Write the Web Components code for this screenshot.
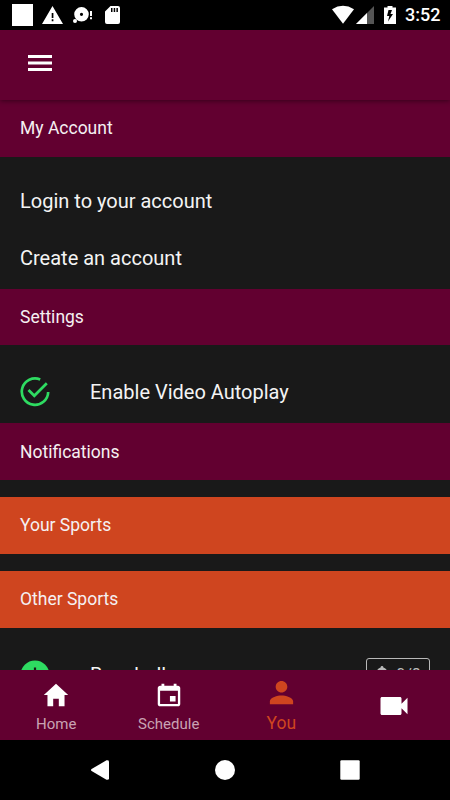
<!DOCTYPE html>
<html lang="en">
<head>
<meta charset="utf-8">
<title>My Account</title>
<style>
    html, body {
        margin: 0;
        height: 100%;
        background: #000;
        overflow: hidden;
    }
</style>
</head>
<body>

<template id="status-bar">
    <style>
        :host {
            display: flex;
            align-items: center;
            flex: none;
            height: 30px;
            box-sizing: border-box;
            padding: 0 9.500px 0 12px;
            background: #000;
            color: white;
            font-size: 18px;
            font-weight: 500;
        }
        svg {
            display: block;
            fill: white;
            flex: none;
        }
        .time {
            margin-left: auto;
            line-height: 30px;
        }
    </style>
    <svg width="120" height="30" viewBox="12 0 120 30">
        <path d="M12 4h21v22H12z"/>
        <path fill-rule="evenodd" d="M52.5 6L63 24H42zM51.7 13v5h1.7v-5zM51.7 19.200v2h1.700v-2z"/>
        <path fill-rule="evenodd" d="M81.500 7a7.300 7.300 0 1 1 0 14.600a7.300 7.300 0 0 1 0-14.600zM81.500 12.700a1.600 1.600 0 1 0 0 3.200a1.600 1.600 0 0 0 0-3.200z"/>
        <circle cx="75" cy="21" r="2"/>
        <path d="M90 11h2v5h-2zM90 17.200h2v2h-2z"/>
        <path fill-rule="evenodd" d="M110.500 6h7.500q2 0 2 2v14q0 2-2 2h-11q-2 0-2-2V11.500zM111 8v4h1.500V8zM113.700 8v4h1.500V8zM116.400 8v4h1.500V8z"/>
    </svg>
    <svg width="66" height="30" viewBox="332 0 66 30" style="margin-left:200px">
        <path d="M332 9.200Q343 2.500 354 9.200L343 23.700z"/>
        <path fill="#555" d="M374 6v18h-18z"/>
        <path d="M367 13v11h-11z"/>
        <path fill-rule="evenodd" d="M387.500 6h5v1.500h3.500V24h-12V7.500h3.500zM388.500 10l-1.500 6h2.300l-1.300 5.500l5-7.500h-2.500l1.500-4z"/>
    </svg>
    <div class="time"><slot></slot></div>
</template>

<template id="app-toolbar">
    <style>
        :host {
            display: flex;
            align-items: center;
            flex: none;
            height: 70px;
            box-sizing: border-box;
            padding: 0 28px 4px;
            background: #620030;
            box-shadow: 0 1px 5px rgba(0, 0, 0, .45);
            z-index: 1;
        }
        svg {
            display: block;
            fill: white;
        }
    </style>
    <svg width="24" height="16" viewBox="0 0 24 16">
        <path d="M0 0h24v2.900H0zM0 6.500h24v2.900H0zM0 13h24v2.900H0z"/>
    </svg>
</template>

<template id="section-header">
    <style>
        :host {
            display: flex;
            align-items: center;
            flex: none;
            height: 56.600px;
            box-sizing: border-box;
            padding: 0 20px;
            background: #620030;
            color: #f5f0f2;
            font-size: 17.500px;
        }
        :host([accent]) {
            background: #cf451f;
            margin-top: 17.200px;
        }
    </style>
    <slot></slot>
</template>

<template id="list-row">
    <style>
        :host {
            display: flex;
            align-items: center;
            flex: none;
            height: 57.400px;
            padding: 0 20px;
            font-size: 20px;
            color: #f4f4f4;
        }
        ::slotted(svg) {
            display: block;
            width: 30px;
            height: 30px;
            margin-right: 40px;
        }
        ::slotted(sport-badge) {
            margin-left: auto;
        }
    </style>
    <slot name="icon"></slot>
    <span><slot></slot></span>
    <slot name="end"></slot>
</template>

<template id="sport-badge">
    <style>
        :host {
            display: flex;
            align-items: center;
            justify-content: center;
            gap: 7px;
            width: 64px;
            height: 33px;
            box-sizing: border-box;
            border: 1.500px solid #b9b9b9;
            border-radius: 3px;
            color: #b9b9b9;
            font-size: 16px;
        }
    </style>
    <svg width="14" height="18" viewBox="0 0 14 18" fill="currentColor">
        <path d="M7 0a1.400 1.400 0 0 1 1.400 1.400C11 2.200 12.500 4.500 12.500 7v4.500l1.500 1.700v1H0v-1l1.500-1.700V7c0-2.500 1.500-4.800 4.100-5.600A1.400 1.400 0 0 1 7 0zM5 15.500h4a2 2 0 0 1-4 0z"/>
    </svg>
    <span><slot></slot></span>
</template>

<template id="tab-bar">
    <style>
        :host {
            display: grid;
            grid-template-columns: repeat(4, 1fr);
            flex: none;
            height: 70px;
            background: #620030;
            z-index: 1;
        }
    </style>
    <slot></slot>
</template>

<template id="tab-item">
    <style>
        :host {
            display: flex;
            flex-direction: column;
            align-items: center;
            box-sizing: border-box;
            padding-top: 10px;
            color: #c9a3b3;
            font-size: 15px;
        }
        ::slotted(svg) {
            display: block;
            width: 30px;
            height: 30px;
            fill: white;
        }
        .label {
            line-height: 20px;
            margin-top: 4px;
        }
        :host([active]) {
            padding-top: 7px;
            color: #cf451f;
            font-size: 17.500px;
        }
        :host([active]) ::slotted(svg) {
            width: 31px;
            height: 31px;
            fill: #cf451f;
        }
        :host([active]) .label {
            margin-top: 5px;
        }
        :host([solo]) {
            justify-content: center;
            padding-top: 2px;
        }
        :host([solo]) ::slotted(svg) {
            width: 36px;
            height: 36px;
        }
        :host([solo]) .label {
            display: none;
        }
    </style>
    <slot name="icon"></slot>
    <div class="label"><slot></slot></div>
</template>

<template id="system-nav">
    <style>
        :host {
            display: flex;
            align-items: center;
            justify-content: space-between;
            flex: none;
            height: 60px;
            box-sizing: border-box;
            padding: 0 90px;
            background: #000;
        }
        svg {
            display: block;
            width: 20px;
            height: 20px;
            fill: white;
        }
    </style>
    <svg viewBox="0 0 20 20"><path d="M1.600 9L16.500.3Q19 0 19 1.500v17Q19 20 16.500 19.700L1.600 11q-1.200-1 0-2z"/></svg>
    <svg viewBox="0 0 20 20"><circle cx="10" cy="10" r="10"/></svg>
    <svg viewBox="0 0 20 20"><rect x=".3" y=".3" width="19.400" height="19.400" rx="1.200"/></svg>
</template>

<template id="account-app">
    <style>
        :host {
            display: flex;
            flex-direction: column;
            width: 450px;
            height: 800px;
            font-family: Roboto, "Liberation Sans", sans-serif;
            background: #191919;
        }
        main {
            display: flex;
            flex-direction: column;
            flex: 1;
            min-height: 0;
            overflow: hidden;
        }
        .group {
            display: flex;
            flex-direction: column;
            flex: none;
            padding: 15.500px 0 2px;
        }
        .settings {
            padding: 17.500px 0 3px;
        }
        .sports {
            padding-top: 18.300px;
        }
    </style>
    <status-bar>3:52</status-bar>
    <app-toolbar></app-toolbar>
    <main>
        <section-header>My Account</section-header>
        <div class="group">
            <list-row>Login to your account</list-row>
            <list-row>Create an account</list-row>
        </div>
        <section-header>Settings</section-header>
        <div class="group settings">
            <list-row>
                <svg slot="icon" viewBox="0 0 30 30" fill="none" stroke="#2edb61" stroke-width="2.700">
                    <path d="M20.200 2.500A13.200 13.200 0 1 0 28.200 15"/>
                    <path d="M8.500 13l5.800 5.800L26.800 6.200"/>
                </svg>
                Enable Video Autoplay
            </list-row>
        </div>
        <section-header>Notifications</section-header>
        <section-header accent>Your Sports</section-header>
        <section-header accent>Other Sports</section-header>
        <div class="group sports">
            <list-row>
                <svg slot="icon" viewBox="0 0 30 30">
                    <circle cx="15" cy="15" r="14.500" fill="#2edb61"/>
                    <path d="M13.900 7.500h2.200v6.400h6.400v2.200h-6.400v6.400h-2.200v-6.400H7.500v-2.200h6.400z" fill="#191919"/>
                </svg>
                Baseball
                <sport-badge slot="end">0/8</sport-badge>
            </list-row>
        </div>
    </main>
    <tab-bar>
        <tab-item>
            <svg slot="icon" viewBox="0 0 512 512"><path d="M208 448V320h96v128h97.600V256H464L256 64 48 256h62.400v192z"/></svg>
            Home
        </tab-item>
        <tab-item>
            <svg slot="icon" viewBox="0 0 512 512"><path d="M368 272h-96v96h96v-96zm-32-208v32H176V64h-48v32h-24c-22 0-40 18-40 40v272c0 22 18 40 40 40h304c22 0 40-18 40-40V136c0-22-18-40-40-40h-24V64h-48zm72 344H104V184h304v224z"/></svg>
            Schedule
        </tab-item>
        <tab-item active>
            <svg slot="icon" viewBox="0 0 512 512"><path d="M256 256c52.800 0 96-43.200 96-96s-43.200-96-96-96-96 43.200-96 96 43.200 96 96 96zm0 48c-63.600 0-192 32.400-192 96v48h384v-48c0-63.600-128.400-96-192-96z"/></svg>
            You
        </tab-item>
        <tab-item solo>
            <svg slot="icon" viewBox="0 0 24 24"><path d="M17 10.500V7c0-.55-.45-1-1-1H4c-.55 0-1 .45-1 1v10c0 .55.45 1 1 1h12c.55 0 1-.45 1-1v-3.500l4 4v-11l-4 4z"/></svg>
        </tab-item>
    </tab-bar>
    <system-nav></system-nav>
</template>

<script>
    // Every element takes its markup from the template that shares its tag name
    class TemplateElement extends HTMLElement {
        constructor() {
            super();
            const template = document.getElementById(this.localName);
            let shadowRoot = this.attachShadow({ mode: 'open' });
            shadowRoot.appendChild(template.content.cloneNode(true));
        }
    }

    customElements.define("status-bar", class extends TemplateElement {});
    customElements.define("app-toolbar", class extends TemplateElement {});
    customElements.define("section-header", class extends TemplateElement {});
    customElements.define("sport-badge", class extends TemplateElement {});
    customElements.define("list-row", class extends TemplateElement {});
    customElements.define("tab-item", class extends TemplateElement {});
    customElements.define("tab-bar", class extends TemplateElement {});
    customElements.define("system-nav", class extends TemplateElement {});
    customElements.define("account-app", class extends TemplateElement {});
</script>

<account-app></account-app>
</body>
</html>
